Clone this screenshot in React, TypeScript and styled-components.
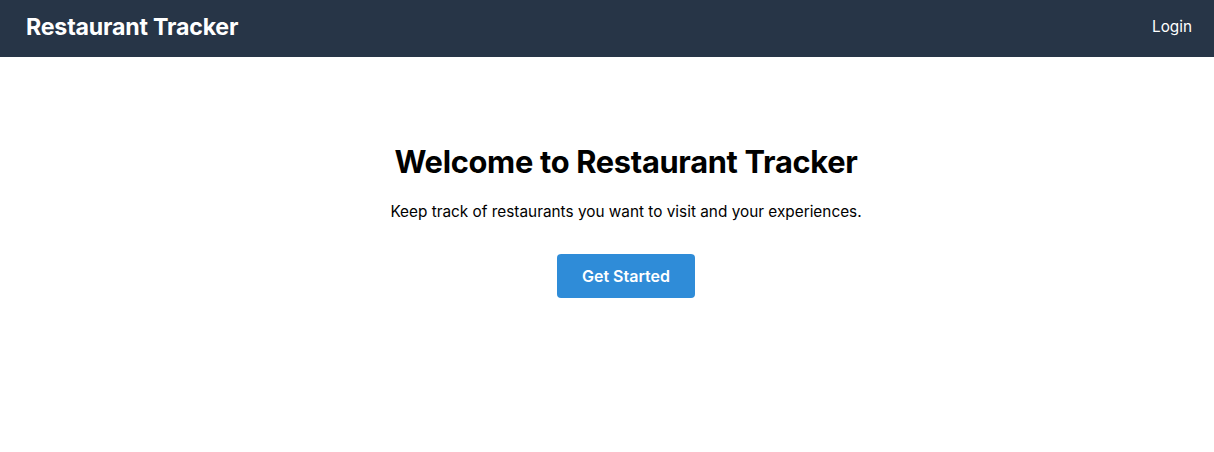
import styled, { createGlobalStyle } from "styled-components";

const GlobalStyle = createGlobalStyle`
    body {
        margin: 0;
        font-family: Inter, "Noto Sans", sans-serif;
        background: #fff;
        color: #000;
    }
`;

const NavBar = styled.header`
    height: 57px;
    box-sizing: border-box;
    background: #273547;
    display: flex;
    align-items: center;
    justify-content: space-between;
    padding: 0 22px 4px 26px;
`;

const Brand = styled.h1`
    margin: 0;
    color: #fff;
    font-size: 23.2px;
    font-weight: 700;
    letter-spacing: -0.2px;
`;

const NavLink = styled.a`
    color: #fff;
    font-size: 15.3px;
    cursor: pointer;
`;

const Hero = styled.main`
    display: flex;
    flex-direction: column;
    align-items: center;
    padding: 86px 0 0 38px;
`;

const Title = styled.h2`
    margin: 0;
    font-size: 30.8px;
    font-weight: 700;
    line-height: 38px;
    letter-spacing: -0.3px;
`;

const Lead = styled.p`
    margin: 19px 0 0;
    font-size: 15.35px;
    line-height: 24px;
`;

const Button = styled.button`
    margin-top: 30px;
    height: 44px;
    padding: 0 25px;
    border: none;
    border-radius: 4px;
    background: #2f8cd8;
    color: #fff;
    font-family: inherit;
    font-size: 16px;
    font-weight: 600;
    cursor: pointer;
`;

export default function App() {
    return (
        <>
            <GlobalStyle />
            <NavBar>
                <Brand>Restaurant Tracker</Brand>
                <NavLink>Login</NavLink>
            </NavBar>
            <Hero>
                <Title>Welcome to Restaurant Tracker</Title>
                <Lead>Keep track of restaurants you want to visit and your experiences.</Lead>
                <Button>Get Started</Button>
            </Hero>
        </>
    );
}
